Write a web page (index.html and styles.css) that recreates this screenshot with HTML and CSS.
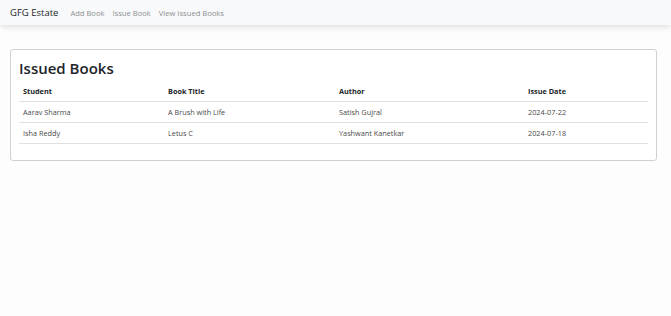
FILE: index.html
```html
<!DOCTYPE html>
<html lang="en">
<head>
  <meta charset="UTF-8" />
  <meta name="viewport" content="width=device-width, initial-scale=1.0" />
  <title>View Issued Books</title>
  <link rel="stylesheet" href="styles.css">
</head>
<body>
  <!-- Navbar -->
  <nav class="navbar">
    <a class="brand" href="#">GFG Estate</a>
    <ul class="nav-links">
      <li><a href="#">Add Book</a></li>
      <li><a href="#">Issue Book</a></li>
      <li><a href="#">View Issued Books</a></li>
    </ul>
  </nav>

  <div class="container">
    <div class="card">
      <h2>Issued Books</h2>
      <table class="table">
        <thead>
          <tr>
            <th class="col-student">Student</th>
            <th class="col-title">Book Title</th>
            <th class="col-author">Author</th>
            <th>Issue Date</th>
          </tr>
        </thead>
        <tbody>
          <tr>
            <td>Aarav Sharma</td>
            <td>A Brush with Life</td>
            <td>Satish Gujral</td>
            <td>2024-07-22</td>
          </tr>
          <tr>
            <td>Isha Reddy</td>
            <td>Letus C</td>
            <td>Yashwant Kanetkar</td>
            <td>2024-07-18</td>
          </tr>
        </tbody>
      </table>
    </div>
  </div>
</body>
</html>
```

FILE: styles.css
```css
body {
  margin: 0;
  padding: 0;
  font-family: "Open Sans", "Noto Sans", sans-serif;
  background: #fdfdfd;
  color: #212529;
}
a {
  text-decoration: none;
}
.navbar {
  display: flex;
  align-items: center;
  height: 25px;
  padding: 0 10px;
  background: #f8f9fa;
  box-shadow: 0 2px 6px rgba(0, 0, 0, 0.12);
}
.brand {
  font-size: 9.5px;
  line-height: 12px;
  color: #212529;
  margin-right: 12px;
}
.nav-links {
  display: flex;
  align-items: center;
  gap: 8px;
  list-style: none;
  margin: 0;
  padding: 0;
  font-size: 7.6px;
  line-height: 12px;
}
.nav-links a {
  color: #8c8f93;
}
.container {
  padding: 24px 14px 0 10px;
}
.card {
  border: 1px solid #d0d0d0;
  border-radius: 3px;
  background: #fff;
  padding: 7px 8px 16px 8px;
}
.card h2 {
  margin: 0 0 2px;
  font-size: 15px;
  font-weight: 600;
  line-height: 22px;
  color: #212529;
}
.table {
  width: 100%;
  border-collapse: collapse;
  font-size: 7.3px;
}
.table th,
.table td {
  text-align: left;
  padding: 0 4px;
  height: 20px;
  border-bottom: 1px solid #dee2e6;
}
.table th {
  font-weight: 700;
  color: #212529;
}
.table td {
  color: #4a4a4a;
}
.col-student { width: 137px; }
.col-title { width: 163px; }
.col-author { width: 181px; }
```
